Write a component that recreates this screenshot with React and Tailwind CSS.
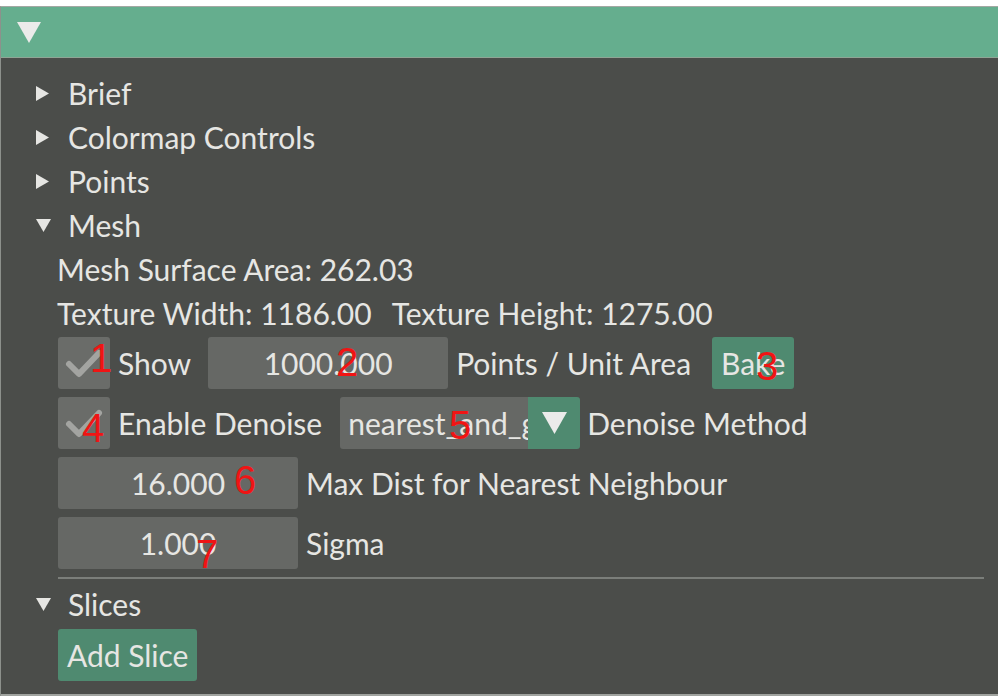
import React from "react";

const Arrow = ({ open }) =>
  open ? (
    <svg width="15" height="13" viewBox="0 0 15 13" className="shrink-0">
      <path d="M0 0 L15 0 L7.5 13 Z" fill="#e6e6e3" />
    </svg>
  ) : (
    <svg width="13" height="15" viewBox="0 0 13 15" className="shrink-0">
      <path d="M0 0 L13 7.5 L0 15 Z" fill="#e6e6e3" />
    </svg>
  );

const TreeNode = ({ label, open }) => (
  <div className="flex items-center h-[34px] pl-[35px]">
    <div className="w-[32px] flex items-center">
      <Arrow open={open} />
    </div>
    <span>{label}</span>
  </div>
);

const Check = () => (
  <div className="w-[52px] h-[52px] bg-[#6a6c69] rounded-[3px] flex items-center justify-center shrink-0">
    <svg width="40" height="32" viewBox="0 0 40 32">
      <path
        d="M5 17 L15 27 L35 6"
        fill="none"
        stroke="#a3a4a1"
        strokeWidth="6"
        strokeLinecap="round"
        strokeLinejoin="round"
      />
    </svg>
  </div>
);

const Field = ({ value }) => (
  <div className="w-[240px] h-[52px] bg-[#666865] rounded-[3px] flex items-center justify-center shrink-0">
    {value}
  </div>
);

const marks = [
  { n: "1", cls: "left-[90px] top-[338px]" },
  { n: "2", cls: "left-[336px] top-[342px]" },
  { n: "3", cls: "left-[756px] top-[346px]" },
  { n: "4", cls: "left-[82px] top-[408px]" },
  { n: "5", cls: "left-[449px] top-[405px]" },
  { n: "6", cls: "left-[234px] top-[460px]" },
  { n: "7", cls: "left-[196px] top-[534px]" },
];

export default function App() {
  return (
    <div className="relative w-[998px] h-[700px] bg-white overflow-hidden font-['Lato','Liberation_Sans',sans-serif] text-[30px] leading-[34px] text-[#e6e6e3]">
      <div className="mt-[6px] border-t border-[#a3a8a3] border-l border-l-[#8d918c]">
        {/* Header */}
        <div className="h-[51px] bg-[#65ae8e] border-b border-[#8fa595] flex items-center pl-[16px]">
          <svg width="24" height="21" viewBox="0 0 24 21">
            <path d="M0 0 L24 0 L12 21 Z" fill="#ebebea" />
          </svg>
        </div>

        {/* Body */}
        <div className="h-[638px] bg-[#4b4d4a] pt-[18px] border-b-2 border-[#a0a39f]">
          <div className="flex flex-col gap-[10px]">
            <TreeNode label="Brief" />
            <TreeNode label="Colormap Controls" />
            <TreeNode label="Points" />
            <TreeNode label="Mesh" open />
            <div className="pl-[56px]">Mesh Surface Area: 262.03</div>
            <div className="pl-[56px] flex gap-[20px]">
              <span>Texture Width: 1186.00</span>
              <span>Texture Height: 1275.00</span>
            </div>
          </div>

          <div className="pl-[57px] mt-[7px] flex flex-col gap-[8px]">
            <div className="flex items-center">
              <Check />
              <span className="ml-[8px]">Show</span>
              <div className="ml-[17px]">
                <Field value="1000.000" />
              </div>
              <span className="ml-[8px]">Points / Unit Area</span>
              <button className="ml-[21px] h-[52px] px-[9px] bg-[#4f8a70] rounded-[3px]">Bake</button>
            </div>

            <div className="flex items-center">
              <Check />
              <span className="ml-[8px]">Enable Denoise</span>
              <div className="ml-[18px] w-[240px] h-[52px] flex rounded-[3px] overflow-hidden shrink-0">
                <div className="flex-1 bg-[#666865] pl-[8px] flex items-center overflow-hidden whitespace-nowrap">
                  nearest_and_gaussian
                </div>
                <div className="w-[52px] bg-[#4f8a70] flex items-center justify-center">
                  <svg width="25" height="22" viewBox="0 0 25 22">
                    <path d="M0 0 L25 0 L12.5 22 Z" fill="#ebebea" />
                  </svg>
                </div>
              </div>
              <span className="ml-[7px]">Denoise Method</span>
            </div>

            <div className="flex items-center">
              <Field value="16.000" />
              <span className="ml-[8px]">Max Dist for Nearest Neighbour</span>
            </div>

            <div className="flex items-center">
              <Field value="1.000" />
              <span className="ml-[8px]">Sigma</span>
            </div>

            <div className="h-[2px] bg-[#7b7e7a] w-[926px]" />
          </div>

          <div className="mt-[8px]">
            <TreeNode label="Slices" open />
          </div>
          <div className="pl-[57px] mt-[8px]">
            <button className="h-[52px] px-[9px] bg-[#4f8a70] rounded-[3px]">Add Slice</button>
          </div>
        </div>
      </div>

      {marks.map((m) => (
        <span
          key={m.n}
          className={`absolute ${m.cls} font-['Liberation_Sans',sans-serif] text-[40px] leading-[40px] text-[#f01414]`}
        >
          {m.n}
        </span>
      ))}
    </div>
  );
}
